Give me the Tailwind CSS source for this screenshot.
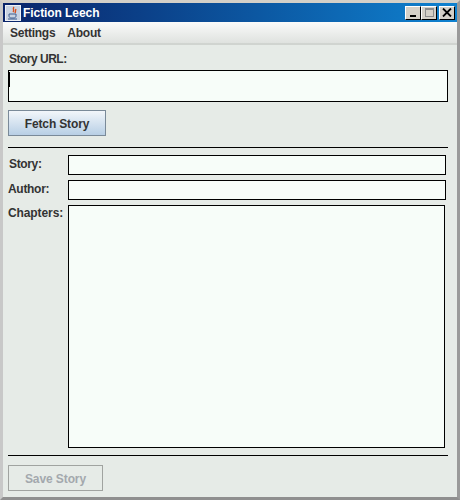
<!DOCTYPE html>
<html lang="en">

<head>
    <meta charset="UTF-8">
    <title>Fiction Leech</title>
    <script src="https://cdn.jsdelivr.net/npm/@tailwindcss/browser@4"></script>
</head>

<body class="bg-[#e6ebe7]">
    <div class="w-[460px] h-[500px] flex flex-col overflow-hidden border-l-[3px] border-r-[3px] border-t-[3px] border-b-[3px] border-l-[#c8c8c8] border-t-[#d4d0c8] border-r-[#9a9a9a] border-b-[#8f8f8f] font-['Liberation_Sans',Arial,sans-serif] text-[12px] font-bold text-[#333333]">
        <!-- title bar -->
        <div class="h-[19px] shrink-0 flex items-center bg-gradient-to-r from-[#0a246a] to-[#0f82d0] pl-[2px] pr-[2px]">
            <div class="w-[16px] h-[16px] bg-[#c9d3e2] border border-[#eef1f6] flex items-center justify-center">
                <svg width="14" height="14" viewBox="0 0 14 14">
                    <path d="M8 1 C6 3 9 4 7 6 M10 3 C9 5 10 5 9 7" fill="none" stroke="#d8501c" stroke-width="1.4" />
                    <path d="M3 8 H10 V10 C10 11 9 12 8 12 H5 C4 12 3 11 3 10 Z" fill="none" stroke="#3f5f90" stroke-width="1" />
                    <path d="M2 13 H11" stroke="#3f5f90" stroke-width="1" />
                </svg>
            </div>
            <span class="ml-[2px] text-white text-[12px] leading-none tracking-[-0.07px]">Fiction Leech</span>
            <div class="ml-auto flex items-center">
                <div class="w-[16px] h-[14px] bg-[#d4d0c8] border border-t-white border-l-white border-r-black border-b-black flex items-end justify-center pb-[2px]">
                    <div class="w-[6px] h-[2px] bg-black"></div>
                </div>
                <div class="w-[16px] h-[14px] bg-[#d4d0c8] border border-t-white border-l-white border-r-black border-b-black flex items-center justify-center">
                    <div class="w-[9px] h-[9px] border border-[#8c8c8c] border-t-2"></div>
                </div>
                <div class="ml-[2px] w-[16px] h-[14px] bg-[#d4d0c8] border border-t-white border-l-white border-r-black border-b-black flex items-center justify-center">
                    <svg width="10" height="9" viewBox="0 0 10 9">
                        <path d="M1 0.5 L9 8.5 M9 0.5 L1 8.5" stroke="#000" stroke-width="1.8" />
                    </svg>
                </div>
            </div>
        </div>

        <!-- menu bar -->
        <div class="h-[23px] shrink-0 flex items-center gap-[12px] pl-[7px] bg-gradient-to-b from-[#fafbfa] to-[#dfe2df] border-b-2 border-[#d0d4d0] text-[#333333] tracking-[-0.25px]">
            <span>Settings</span>
            <span>About</span>
        </div>

        <!-- url -->
        <div class="flex flex-col pl-[5px] pt-[7px] pr-[9px]">
            <label class="leading-[14px] pl-[1px] tracking-[-0.5px]">Story URL:</label>
            <div class="mt-[4px] h-[32px] w-[440px] border border-black bg-[#f7fdf9] relative">
                <div class="absolute left-0 top-[1px] w-[1px] h-[15px] bg-black"></div>
            </div>
            <button class="mt-[8px] w-[98px] h-[26px] pt-[2px] border border-[#7a8a99] bg-gradient-to-b from-[#f2f6fa] to-[#b8cfe5] text-[#333333] font-bold text-[12px] tracking-[-0.15px]">Fetch Story</button>
            <div class="mt-[11px] w-[440px] h-[1px] bg-black"></div>
        </div>

        <!-- story fields -->
        <div class="flex flex-col flex-1 pl-[5px] pt-[7px]">
            <div class="flex items-center h-[20px]">
                <span class="w-[60px] pl-[1px] pb-[2px] tracking-[-0.35px]">Story:</span>
                <div class="w-[378px] h-[20px] border border-black bg-[#f7fdf9]"></div>
            </div>
            <div class="flex items-center h-[20px] mt-[5px]">
                <span class="w-[60px] pb-[2px] tracking-[-0.3px]">Author:</span>
                <div class="w-[378px] h-[20px] border border-black bg-[#f7fdf9]"></div>
            </div>
            <div class="flex mt-[5px]">
                <span class="w-[60px] leading-[16px] tracking-[-0.1px]">Chapters:</span>
                <div class="w-[377px] h-[243px] border border-black bg-[#f7fdf9]"></div>
            </div>
            <div class="mt-[7px] w-[440px] h-[1px] bg-black"></div>
            <button class="mt-[9px] w-[95px] h-[26px] pt-[2px] border border-[#a0a3a0] text-[#a3a8ad] font-bold text-[12px] tracking-[-0.1px]">Save Story</button>
        </div>
    </div>
</body>

</html>
